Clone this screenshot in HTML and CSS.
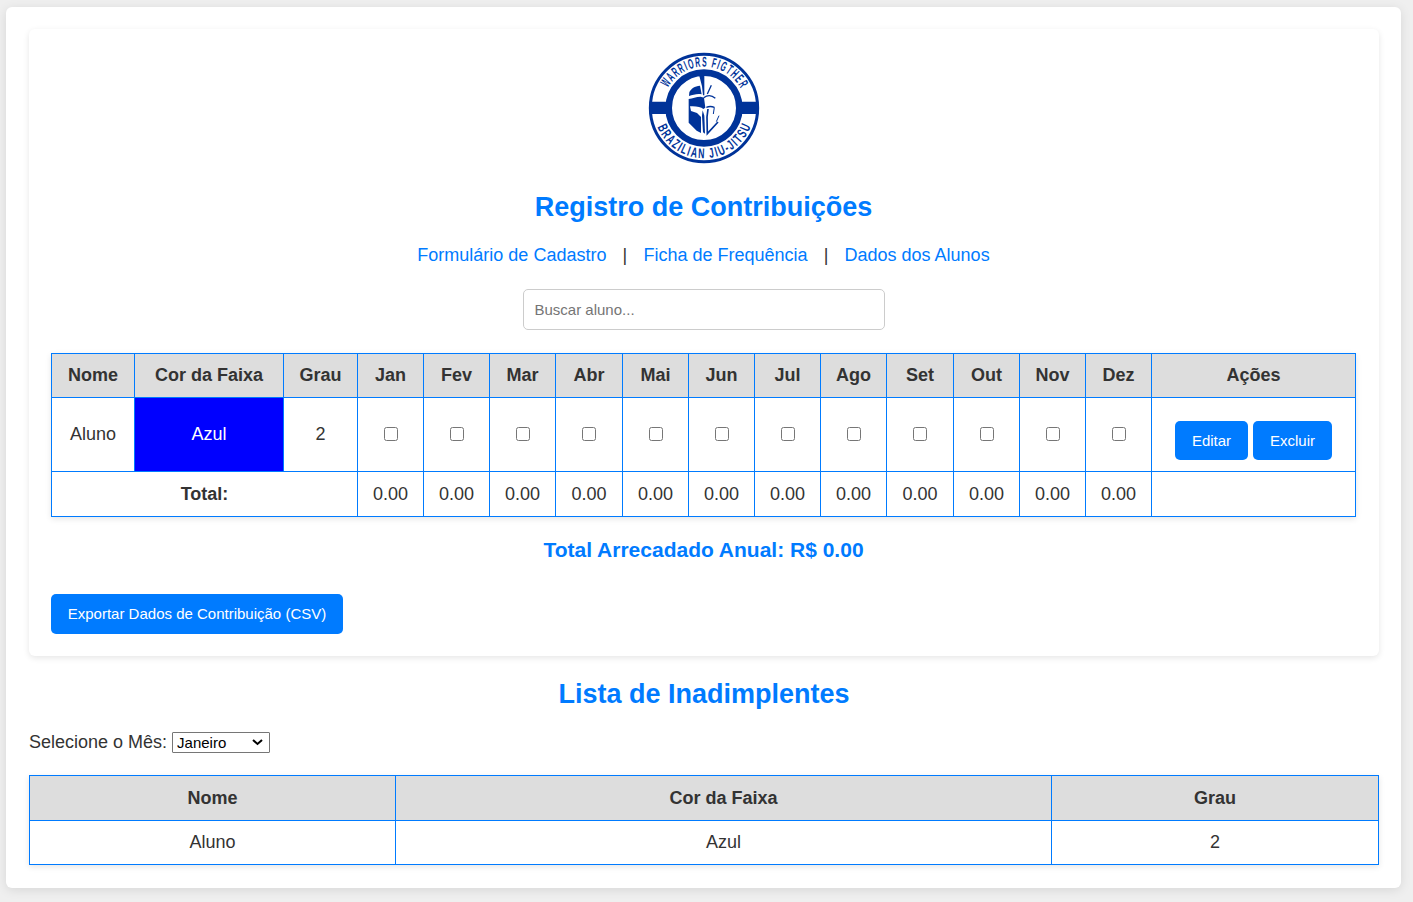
FILE: index.html
```html
<!DOCTYPE html>
<html lang="pt-BR">
<head>
<meta charset="utf-8">
<title>Registro de Contribuições</title>
<link rel="stylesheet" href="styles.css">
</head>
<body>
<main class="page">
  <section class="card">
    <svg class="logo" viewBox="23 21 336 336" role="img" aria-label="Logo">
      <defs>
        <path id="arc-top" d="M67 189a124 124 0 0 1 248 0"/>
        <path id="arc-bottom" d="M40 189a151 151 0 0 0 302 0"/>
      </defs>
      <g fill="none" stroke="#003399">
        <circle cx="191" cy="189" r="161" stroke-width="9"/>
        <circle cx="191" cy="189" r="106" stroke-width="20"/>
      </g>
      <path fill="#003399" d="M28 170h62v37H28zM292 170h62v37h-62z"/>
      <g fill="#003399">
        <path d="M177 93h15v58h-4l-3-27z"/>
        <path d="M179 122c-16 1-27 9-32 20l-1 11c12-3 24-8 38-5z"/>
        <path d="M145 162c12-2 22-7 36-7l10 3 4 30-6 4c-7-7-23-9-40-8l3 14 18 6 12 12v48l-13-7-24-24z"/>
        <path d="M187 196l5 16 2 54-6-4-3-50z"/>
      </g>
      <g fill="none" stroke="#003399" stroke-width="4">
        <path d="M190 158c11-8 24-8 35 2M201 147l12-26M198 187c9-4 17-3 24 0"/>
        <path d="M203 192l-3 24 1 50 32-35" stroke-width="5"/>
        <path d="M222 187l-3 20M236 212l-8 18" stroke-width="3"/>
      </g>
      <g class="logo-text">
        <text><textPath href="#arc-top" startOffset="63" textLength="269" lengthAdjust="spacingAndGlyphs">WARRIORS FIGTHER</textPath></text>
        <text><textPath href="#arc-bottom" startOffset="58" textLength="364" lengthAdjust="spacingAndGlyphs">BRAZILIAN JIU-JITSU</textPath></text>
      </g>
    </svg>
    <h1 class="title">Registro de Contribuições</h1>
    <nav class="nav"><a href="#">Formulário de Cadastro</a><span>|</span><a href="#">Ficha de Frequência</a><span>|</span><a href="#">Dados dos Alunos</a></nav>
    <input class="search" type="text" placeholder="Buscar aluno...">
    <table class="table contributions">
      <colgroup><col class="c-name"><col class="c-belt"><col class="c-grade"><col span="3" class="c-month"><col class="c-month-wide"><col span="4" class="c-month"><col class="c-month-wide"><col span="3" class="c-month"><col class="c-actions"></colgroup>
      <tr class="head"><th>Nome</th><th>Cor da Faixa</th><th>Grau</th><th>Jan</th><th>Fev</th><th>Mar</th><th>Abr</th><th>Mai</th><th>Jun</th><th>Jul</th><th>Ago</th><th>Set</th><th>Out</th><th>Nov</th><th>Dez</th><th>Ações</th></tr>
      <tr class="student"><td>Aluno</td><td class="blue">Azul</td><td>2</td><td><input type="checkbox"></td><td><input type="checkbox"></td><td><input type="checkbox"></td><td><input type="checkbox"></td><td><input type="checkbox"></td><td><input type="checkbox"></td><td><input type="checkbox"></td><td><input type="checkbox"></td><td><input type="checkbox"></td><td><input type="checkbox"></td><td><input type="checkbox"></td><td><input type="checkbox"></td><td><div class="actions"><button class="btn edit">Editar</button><button class="btn delete">Excluir</button></div></td></tr>
      <tr class="totals"><th colspan="3">Total:</th><td>0.00</td><td>0.00</td><td>0.00</td><td>0.00</td><td>0.00</td><td>0.00</td><td>0.00</td><td>0.00</td><td>0.00</td><td>0.00</td><td>0.00</td><td>0.00</td><td></td></tr>
    </table>
    <h3 class="annual">Total Arrecadado Anual: R$ 0.00</h3>
    <button class="btn export">Exportar Dados de Contribuição (CSV)</button>
  </section>
  <h2 class="title overdue-title">Lista de Inadimplentes</h2>
  <div class="filter"><label for="month">Selecione o Mês:</label><div class="month-box"><select id="month" class="month"><option>Janeiro</option><option>Fevereiro</option><option>Março</option></select><svg class="chevron" viewBox="0 0 11 7"><path d="M1 1l4.5 4L10 1" fill="none" stroke="#000" stroke-width="2"/></svg></div></div>
  <table class="table overdue">
    <colgroup><col class="o-name"><col class="o-belt"><col class="o-grade"></colgroup>
    <tr class="head"><th>Nome</th><th>Cor da Faixa</th><th>Grau</th></tr>
    <tr class="row"><td>Aluno</td><td>Azul</td><td>2</td></tr>
  </table>
</main>
</body>
</html>
```
FILE: styles.css
```css
* { box-sizing: border-box; }
body {
  margin: 0;
  padding: 7px 12px 14px 6px;
  background: #efefef;
  color: #333;
  font: 18px/28px "Liberation Sans", Arial, sans-serif;
}
.page {
  height: 881px;
  padding: 22px 22px 0 23px;
  background: #fff;
  border-radius: 6px;
  box-shadow: 0 2px 11px rgba(0, 0, 0, .1);
}
.card {
  display: flex;
  flex-direction: column;
  align-items: center;
  height: 627px;
  padding: 23px 23px 0 22px;
  border-radius: 6px;
  box-shadow: 0 2px 6px rgba(0, 0, 0, .1);
}
.logo { width: 112px; height: 112px; flex: none; }
.logo-text { fill: #003399; font: 700 42px "Liberation Sans Narrow", "Liberation Sans", sans-serif; letter-spacing: 8px; }
.title { margin: 0; color: #007bff; font-size: 27px; line-height: 34px; text-align: center; }
.card .title { margin-top: 26px; }
.nav { display: flex; margin-top: 17px; }
.nav a { color: #007bff; text-decoration: none; }
.nav span { width: 37px; text-align: center; }
.search {
  width: 362px;
  height: 41px;
  margin: 20px 0 23px;
  padding: 0 11px;
  border: 1px solid #ccc;
  border-radius: 5px;
  font: 15px "Liberation Sans", Arial, sans-serif;
}
.table {
  table-layout: fixed;
  border-collapse: collapse;
  text-align: center;
  box-shadow: 0 2px 6px rgba(0, 0, 0, .1);
}
.table th, .table td { padding: 0; border: 1px solid #007bff; }
.head { background: #ddd; }
.contributions { width: 1305px; flex: none; }
.c-name { width: 83px; }
.c-belt { width: 149px; }
.c-grade { width: 74px; }
.c-month { width: 66px; }
.c-month-wide { width: 67px; }
.c-actions { width: 204px; }
.contributions .head { height: 44px; }
.contributions .head th, .student td, .overdue .row td { padding-bottom: 2px; }
.student { height: 74px; }
.totals { height: 45px; }
.table .blue { background: #00f; color: #fff; }
.table input { display: block; width: 14px; height: 14px; margin: 0 auto; }
.btn {
  height: 39px;
  padding: 0;
  border: 0;
  border-radius: 5px;
  background: #007bff;
  color: #fff;
  font: 15px "Liberation Sans", Arial, sans-serif;
}
.actions { display: flex; justify-content: center; gap: 5px; padding-top: 14px; }
.edit { width: 73px; }
.delete { width: 79px; }
.annual { margin: 19px 0 30px; font-size: 21px; line-height: 28px; color: #007bff; }
.export { align-self: flex-start; width: 292px; height: 40px; padding-bottom: 2px; }
.overdue-title { margin-top: 21px; }
.filter { display: flex; align-items: center; gap: 5px; margin: 17px 0 19px; }
.month-box { display: grid; align-items: center; }
.month-box > * { grid-area: 1 / 1; }
.month {
  appearance: none;
  width: 98px;
  height: 21px;
  padding: 0 4px;
  border: 1px solid #767676;
  border-radius: 1px;
  background: #fff;
  color: #000;
  font: 15px "Liberation Sans", Arial, sans-serif;
}
.chevron { width: 11px; height: 7px; justify-self: end; margin-right: 7px; pointer-events: none; }
.overdue { width: 1350px; }
.o-name { width: 366px; }
.o-belt { width: 656px; }
.o-grade { width: 327px; }
.overdue .head { height: 45px; }
.overdue .row { height: 44px; }
```
